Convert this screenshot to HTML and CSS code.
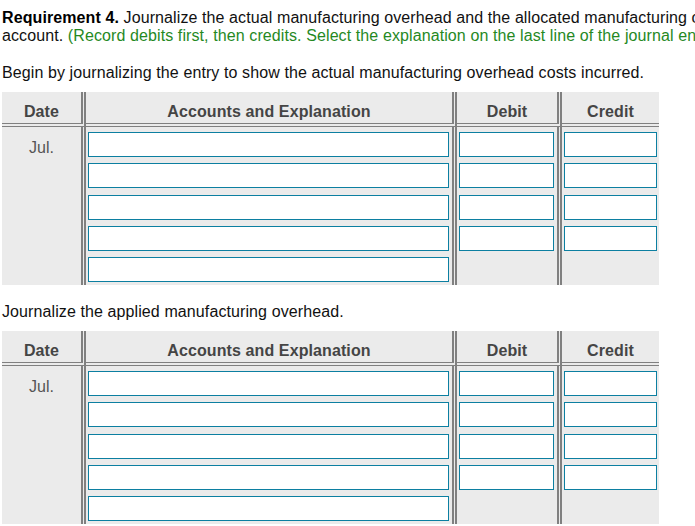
FILE: index.html
```html
<!DOCTYPE html>
<html lang="en">
<head>
<meta charset="utf-8">
<title>Requirement 4</title>
<link rel="stylesheet" href="styles.css">
</head>
<body>
<div class="page">
  <p class="intro">
    <span class="line"><b>Requirement 4.</b> Journalize the actual manufacturing overhead and the allocated manufacturing overhead to the Manufacturing Overhead</span>
    <span class="line">account. <span class="hint">(Record debits first, then credits. Select the explanation on the last line of the journal entry.)</span></span>
  </p>

  <p class="step step-first">Begin by journalizing the entry to show the actual manufacturing overhead costs incurred.</p>

  <div class="journal">
    <div class="hcell col-date">Date</div>
    <div class="hcell col-acct">Accounts and Explanation</div>
    <div class="hcell col-debit">Debit</div>
    <div class="hcell col-credit last">Credit</div>

    <div class="bcell col-date"><span class="month">Jul.</span></div>
    <div class="bcell col-acct">
      <input class="field field-acct" type="text">
      <input class="field field-acct" type="text">
      <input class="field field-acct" type="text">
      <input class="field field-acct" type="text">
      <input class="field field-acct" type="text">
    </div>
    <div class="bcell col-debit">
      <input class="field field-debit" type="text">
      <input class="field field-debit" type="text">
      <input class="field field-debit" type="text">
      <input class="field field-debit" type="text">
    </div>
    <div class="bcell col-credit last">
      <input class="field field-credit" type="text">
      <input class="field field-credit" type="text">
      <input class="field field-credit" type="text">
      <input class="field field-credit" type="text">
    </div>
  </div>

  <p class="step step-second">Journalize the applied manufacturing overhead.</p>

  <div class="journal">
    <div class="hcell col-date">Date</div>
    <div class="hcell col-acct">Accounts and Explanation</div>
    <div class="hcell col-debit">Debit</div>
    <div class="hcell col-credit last">Credit</div>

    <div class="bcell col-date"><span class="month">Jul.</span></div>
    <div class="bcell col-acct">
      <input class="field field-acct" type="text">
      <input class="field field-acct" type="text">
      <input class="field field-acct" type="text">
      <input class="field field-acct" type="text">
      <input class="field field-acct" type="text">
    </div>
    <div class="bcell col-debit">
      <input class="field field-debit" type="text">
      <input class="field field-debit" type="text">
      <input class="field field-debit" type="text">
      <input class="field field-debit" type="text">
    </div>
    <div class="bcell col-credit last">
      <input class="field field-credit" type="text">
      <input class="field field-credit" type="text">
      <input class="field field-credit" type="text">
      <input class="field field-credit" type="text">
    </div>
  </div>
</div>
</body>
</html>
```
FILE: styles.css
```css
html, body {
  margin: 0;
  padding: 0;
  background: #ffffff;
  overflow: hidden;
}

body {
  font-family: "Liberation Sans", Arial, sans-serif;
  font-size: 16px;
  line-height: 18px;
  color: #111111;
}

.page {
  padding: 9px 0 0 2px;
  width: 693px;
  overflow: hidden;
}

.intro {
  margin: 0;
  white-space: nowrap;
  letter-spacing: 0.1px;
}

.intro .line {
  display: block;
}

.intro b {
  font-weight: bold;
  color: #000;
}

.hint {
  color: #26891f;
}

.step {
  margin: 0;
  letter-spacing: 0.1px;
}

.step-first {
  margin-top: 19px;
}

.step-second {
  margin-top: 18px;
}

.journal {
  display: grid;
  grid-template-columns: 84px 371px 105px 97px;
  grid-template-rows: 35px 158px;
  width: 657px;
  margin-top: 10px;
  background: #ebebeb;
}

.hcell,
.bcell {
  box-sizing: border-box;
  border-right: 5px double #808080;
}

.hcell.last,
.bcell.last {
  border-right: none;
}

.hcell {
  border-bottom: 4px double #808080;
  padding-top: 11px;
  text-align: center;
  font-weight: bold;
  color: #454545;
  letter-spacing: 0.1px;
}

.bcell {
  display: flex;
  flex-direction: column;
  gap: 6.25px;
  padding: 5px 0 0 2px;
}

.bcell.col-date {
  padding: 12px 0 0 0;
  align-items: center;
}

.month {
  color: #555555;
}

.field {
  display: block;
  box-sizing: border-box;
  height: 25px;
  margin: 0;
  padding: 0 4px;
  border: 1px solid #0c7fa1;
  border-radius: 0;
  background: #ffffff;
  font: inherit;
  outline: none;
}

.field-acct {
  width: 361px;
}

.field-debit {
  width: 95px;
}

.field-credit {
  width: 93px;
}
```
